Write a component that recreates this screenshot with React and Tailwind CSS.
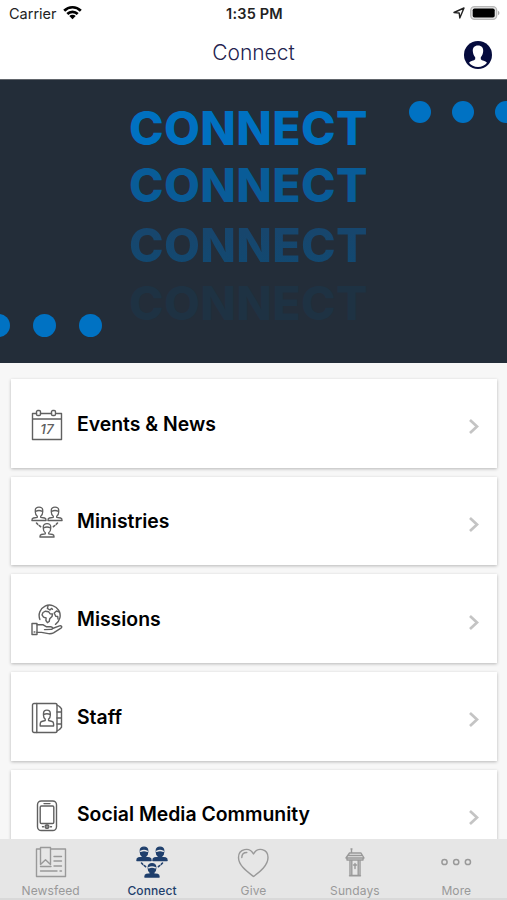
const line = {
  fill: "none",
  stroke: "currentColor",
  strokeWidth: 1.4,
  strokeLinejoin: "round",
  strokeLinecap: "round",
};

function CalendarIcon() {
  return (
    <svg className="size-8" viewBox="0 0 32 32" {...line}>
      <path d="M5.5 4.5H1.5V30.5H30.5V4.5H25.5M9.5 4.5H20.5M1.5 10H30.5" />
      <rect x="5.5" y="1.5" width="4" height="5" rx="1.3" />
      <rect x="20.5" y="1.5" width="4" height="5" rx="1.3" />
      <text x="16" y="25.2" textAnchor="middle" fontSize="13.5" fontWeight="500" fontStyle="italic" fill="currentColor" stroke="none">
        17
      </text>
    </svg>
  );
}

function Person({ x, y, solid }) {
  return (
    <g transform={`translate(${x} ${y})`}>
      <path
        d="M3.3 3.6C3.3 1.7 4.700.7 7 .7s3.700 1 3.700 2.900v2C10.700 8 9.500 9.300 8.700 9.800v1l3.900.7c.9.2 1.500.9 1.500 2.500H-.1c0-1.600.6-2.300 1.500-2.500l3.900-.7v-1C4.500 9.300 3.300 8 3.300 5.600z"
        fill={solid ? "currentColor" : "none"}
      />
      <path d="M3.600 4.800C5.500 3.900 8.500 3.900 10.400 4.800" stroke={solid ? "#e6e6e6" : "currentColor"} />
    </g>
  );
}

function PeopleIcon({ solid }) {
  return (
    <svg className="size-8" viewBox="0 0 32 32" {...line} strokeWidth={1.3}>
      <Person x={1} y={0.5} solid={solid} />
      <Person x={17} y={0.5} solid={solid} />
      <Person x={9} y={17} solid={solid} />
      <path d="M5.500 17l1.200 1.300M8.200 19.500l1.400 1.200M26.500 17l-1.200 1.300M23.800 19.500l-1.400 1.200" strokeWidth="1.600" />
    </svg>
  );
}

function MissionsIcon() {
  return (
    <svg className="size-8" viewBox="0 0 32 32" {...line}>
      <path d="M8.900 15.500A10.500 10.500 0 1 1 24.500 20.300" />
      <path d="M12 8.500l2.500-1.300 3 .5 1.500 2 2.500.3-.5 2.500-2.300 2.300-.5 2.700-1.800 1.200-1.500-2.200.2-2.500-2.600-.8-1.500-2.300zM17 1.800l-.6 2.600 2.500 1.600 1.600-1.600 1 .8M28.500 8l-3-1-2.300 2 1.500 3.200 2 .3.300 2.500" />
      <rect x="1" y="19.500" width="5" height="11" />
      <path d="M6 20.800h6.200l3 1.900h4.600c2 0 2.300 2.600.3 2.700l-6.600.2M21.500 24.500l7-2.600c1.900-.7 3 1.100 1.500 2.200l-7.500 4.700c-1.800 1-4.500 1-6.500.6l-5.500-1H6" />
      <circle cx="3.500" cy="28" r=".3" />
    </svg>
  );
}

function StaffIcon() {
  return (
    <svg className="size-8" viewBox="0 0 32 32" {...line}>
      <rect x="1.500" y="1.500" width="24.500" height="29" rx="1.500" />
      <path d="M5.800 1.500v29M26 3l2.500 1.500 2 2.200v18.600l-2 2.200L26 29M26 10h4.500M26 16h4.500M26 22h4.500" />
      <path d="M12.500 11.500c0-2.300 1.200-3.400 3.400-3.400s3.400 1.100 3.400 3.400v1.800c0 2-1 3.300-1.700 3.800v1.400l3.500 1c1 .3 1.500 1.200 1.500 2.500v2H9.200V22c0-1.300.5-2.200 1.500-2.500l3.500-1v-1.400c-.7-.5-1.700-1.800-1.700-3.800zM12.500 12.500c2-.8 4.800-.8 6.800 0" />
    </svg>
  );
}

function PhoneIcon() {
  return (
    <svg className="size-8" viewBox="0 0 32 32" {...line}>
      <rect x="6.500" y="1" width="19" height="29.500" rx="3.800" />
      <rect x="9.200" y="6" width="13.600" height="17.500" rx="1.200" />
      <path d="M13 3.600h6M11.500 26.700h1M19.500 26.700h1M16 25.200v3" />
      <rect x="14.200" y="25" width="3.600" height="3.400" rx="1.300" />
    </svg>
  );
}

function NewsIcon() {
  return (
    <svg className="size-8" viewBox="0 0 32 32" {...line}>
      <path d="M5 3H1.500v27.500h29V3H15.500M5.500 1.500v17l5-4.700 5 4.700v-17zM19 10.500h7.500M19 15h7.500M19 20h7.500M5.500 20.500H16M5.500 25H22" />
      <path d="M25 25h1.500" />
    </svg>
  );
}

function HeartIcon() {
  return (
    <svg className="size-8" viewBox="0 0 32 32" {...line}>
      <path d="M16.500 30.500C10 25.500 1.500 19.500 1.500 11.500 1.500 2.500 12.500.5 16.500 8 20.500.5 31 2.500 31 11.500 31 19.500 23 25.500 16.500 30.500z" />
      <path d="M4.800 11.500C4.800 8.500 6.800 6.500 9.800 6.500" />
    </svg>
  );
}

function PulpitIcon() {
  return (
    <svg className="size-8" viewBox="0 0 32 32" {...line}>
      <path d="M12.500 7V3M12 3h1M10.500 7H22l3 5H7zM8 12v2h16v-2M11 14v15.500h10V14M12.800 14v15M19.200 14v15M16 17.500v5M14.500 19h3M10.500 29.700h11M9.500 9.500h13" />
    </svg>
  );
}

function MoreIcon() {
  return (
    <svg className="size-8" viewBox="0 0 32 32" {...line} strokeWidth={1.5}>
      <circle cx="4.500" cy="16" r="2.600" />
      <circle cx="16.200" cy="16" r="2.600" />
      <circle cx="27.900" cy="16" r="2.600" />
    </svg>
  );
}

const items = [
  { label: "Events & News", icon: <CalendarIcon /> },
  { label: "Ministries", icon: <PeopleIcon /> },
  { label: "Missions", icon: <MissionsIcon /> },
  { label: "Staff", icon: <StaffIcon /> },
  { label: "Social Media Community", icon: <PhoneIcon /> },
];

const tabs = [
  { label: "Newsfeed", icon: <NewsIcon /> },
  { label: "Connect", icon: <PeopleIcon solid />, active: true },
  { label: "Give", icon: <HeartIcon /> },
  { label: "Sundays", icon: <PulpitIcon /> },
  { label: "More", icon: <MoreIcon /> },
];

function StatusBar() {
  return (
    <div className="grid h-7 grid-cols-3 items-center pl-[9px] pr-[7px] text-[14.500px] text-[#222]">
      <div className="flex items-center gap-1.5">
        <span>Carrier</span>
        <svg className="-mt-1 h-[15px] w-[19px]" viewBox="0 0 19 15">
          <g fill="none" stroke="#000" strokeWidth="2.700">
            <path d="M1.200 5.700a11.700 11.700 0 0 1 16.600 0" />
            <path d="M4.300 9a7.300 7.300 0 0 1 10.400 0" />
          </g>
          <path d="M6.300 11.100a4.500 4.500 0 0 1 6.400 0L9.500 14.300z" />
        </svg>
      </div>
      <div className="text-center text-[14.500px] font-semibold tracking-[0.2px]">1:35 PM</div>
      <div className="-mt-0.5 flex items-center justify-end gap-[5px]">
        <svg className="size-3" viewBox="0 0 12 12" fill="none" stroke="#222" strokeWidth="1.400" strokeLinejoin="round">
          <path d="M1 5.500L11 1 6.800 11 6.200 6z" />
        </svg>
        <svg className="h-[14px] w-[30px]" viewBox="0 0 30 14">
          <rect x=".7" y=".7" width="26" height="12.600" rx="3.800" fill="#e4e4e4" stroke="#b8b8b8" strokeWidth="1.300" />
          <rect x="2.700" y="2.500" width="22" height="9" rx="1.800" />
          <path d="M28 4.800c2 .8 2 3.600 0 4.400z" fill="#aaa" />
        </svg>
      </div>
    </div>
  );
}

function Hero() {
  return (
    <div className="relative h-[283.500px] shrink-0 overflow-hidden border-t border-[#62666c] bg-[#232d39]">
      <div className="absolute left-[129px] top-[25px] text-[46.500px] font-extrabold leading-[46px] tracking-[0.4px] text-[#0071c1]">
        <div className="h-[57px]">CONNECT</div>
        <div className="h-[60px] text-[#095c98]">CONNECT</div>
        <div className="h-[58px] bg-linear-to-b from-[#17466d] from-20% to-[#124971] to-75% bg-clip-text text-transparent">CONNECT</div>
        <div className="text-[#1e3243]">CONNECT</div>
      </div>
      <div className="absolute left-[409px] top-[21px] flex gap-[21px]">
        <span className="size-[22px] rounded-full bg-[#0072c3]" />
        <span className="size-[22px] rounded-full bg-[#0072c3]" />
        <span className="size-[22px] rounded-full bg-[#0072c3]" />
      </div>
      <div className="absolute -left-[13px] top-[234px] flex gap-[23px]">
        <span className="size-[23px] rounded-full bg-[#0072c3]" />
        <span className="size-[23px] rounded-full bg-[#0072c3]" />
        <span className="size-[23px] rounded-full bg-[#0072c3]" />
      </div>
    </div>
  );
}

export default function App() {
  return (
    <div className="flex h-[900px] w-[507px] flex-col overflow-hidden bg-[#f7f7f7] font-['Inter',sans-serif]">
      <header className="h-[79px] shrink-0 bg-white">
        <StatusBar />
        <div className="relative flex h-[50px] items-center justify-center">
          <h1 className="text-[21px] font-light text-[#24234f]">Connect</h1>
          <svg className="absolute right-[15.500px] top-[12.500px] size-7" viewBox="0 0 28 28">
            <circle cx="14" cy="14" r="14" fill="#050b3d" />
            <path
              d="M14 4.500c3.700 0 5.400 2.400 5.200 5.600-.1 2.600-1 4.700-2.400 6.200v2c1 1.400 4.700 1.700 6.200 3.400C21 24.300 17.800 26 14 26s-7-1.700-9-4.300c1.500-1.700 5.200-2 6.200-3.400v-2C9.800 14.800 8.900 12.700 8.800 10.100 8.600 6.900 10.300 4.500 14 4.500z"
              fill="#fff"
            />
          </svg>
        </div>
      </header>

      <Hero />

      <main className="flex min-h-0 flex-1 flex-col gap-[9.200px] overflow-hidden pl-[11px] pr-[10px] pt-[16.500px]">
        {items.map((item) => (
          <div
            key={item.label}
            className="flex h-[88.500px] shrink-0 items-center bg-white pl-[19.500px] pr-[17px] shadow-[0_1px_3px_rgba(0,0,0,0.26)]"
          >
            <span className="mt-[3px] text-[#606060]">{item.icon}</span>
            <span className="ml-[14.500px] mt-0.5 flex-1 text-[19.400px] font-semibold text-black">{item.label}</span>
            <svg className="mt-[7px] h-[17px] w-3" viewBox="0 0 12 17" fill="none" stroke="#c4c4c4" strokeWidth="2.700">
              <path d="M2 2l7 6.500L2 15" />
            </svg>
          </div>
        ))}
      </main>

      <nav className="grid h-[61px] shrink-0 grid-cols-5 border-b-2 border-[#d9d9d9] bg-[#e6e6e6]">
        {tabs.map((tab) => (
          <div
            key={tab.label}
            className={`flex flex-col items-center pt-[7px] ${tab.active ? "font-medium text-[#1f3f6c]" : "text-[#999]"}`}
          >
            {tab.icon}
            <span className="mt-[5px] text-[12px] leading-4 tracking-[0.1px]">{tab.label}</span>
          </div>
        ))}
      </nav>
    </div>
  );
}
